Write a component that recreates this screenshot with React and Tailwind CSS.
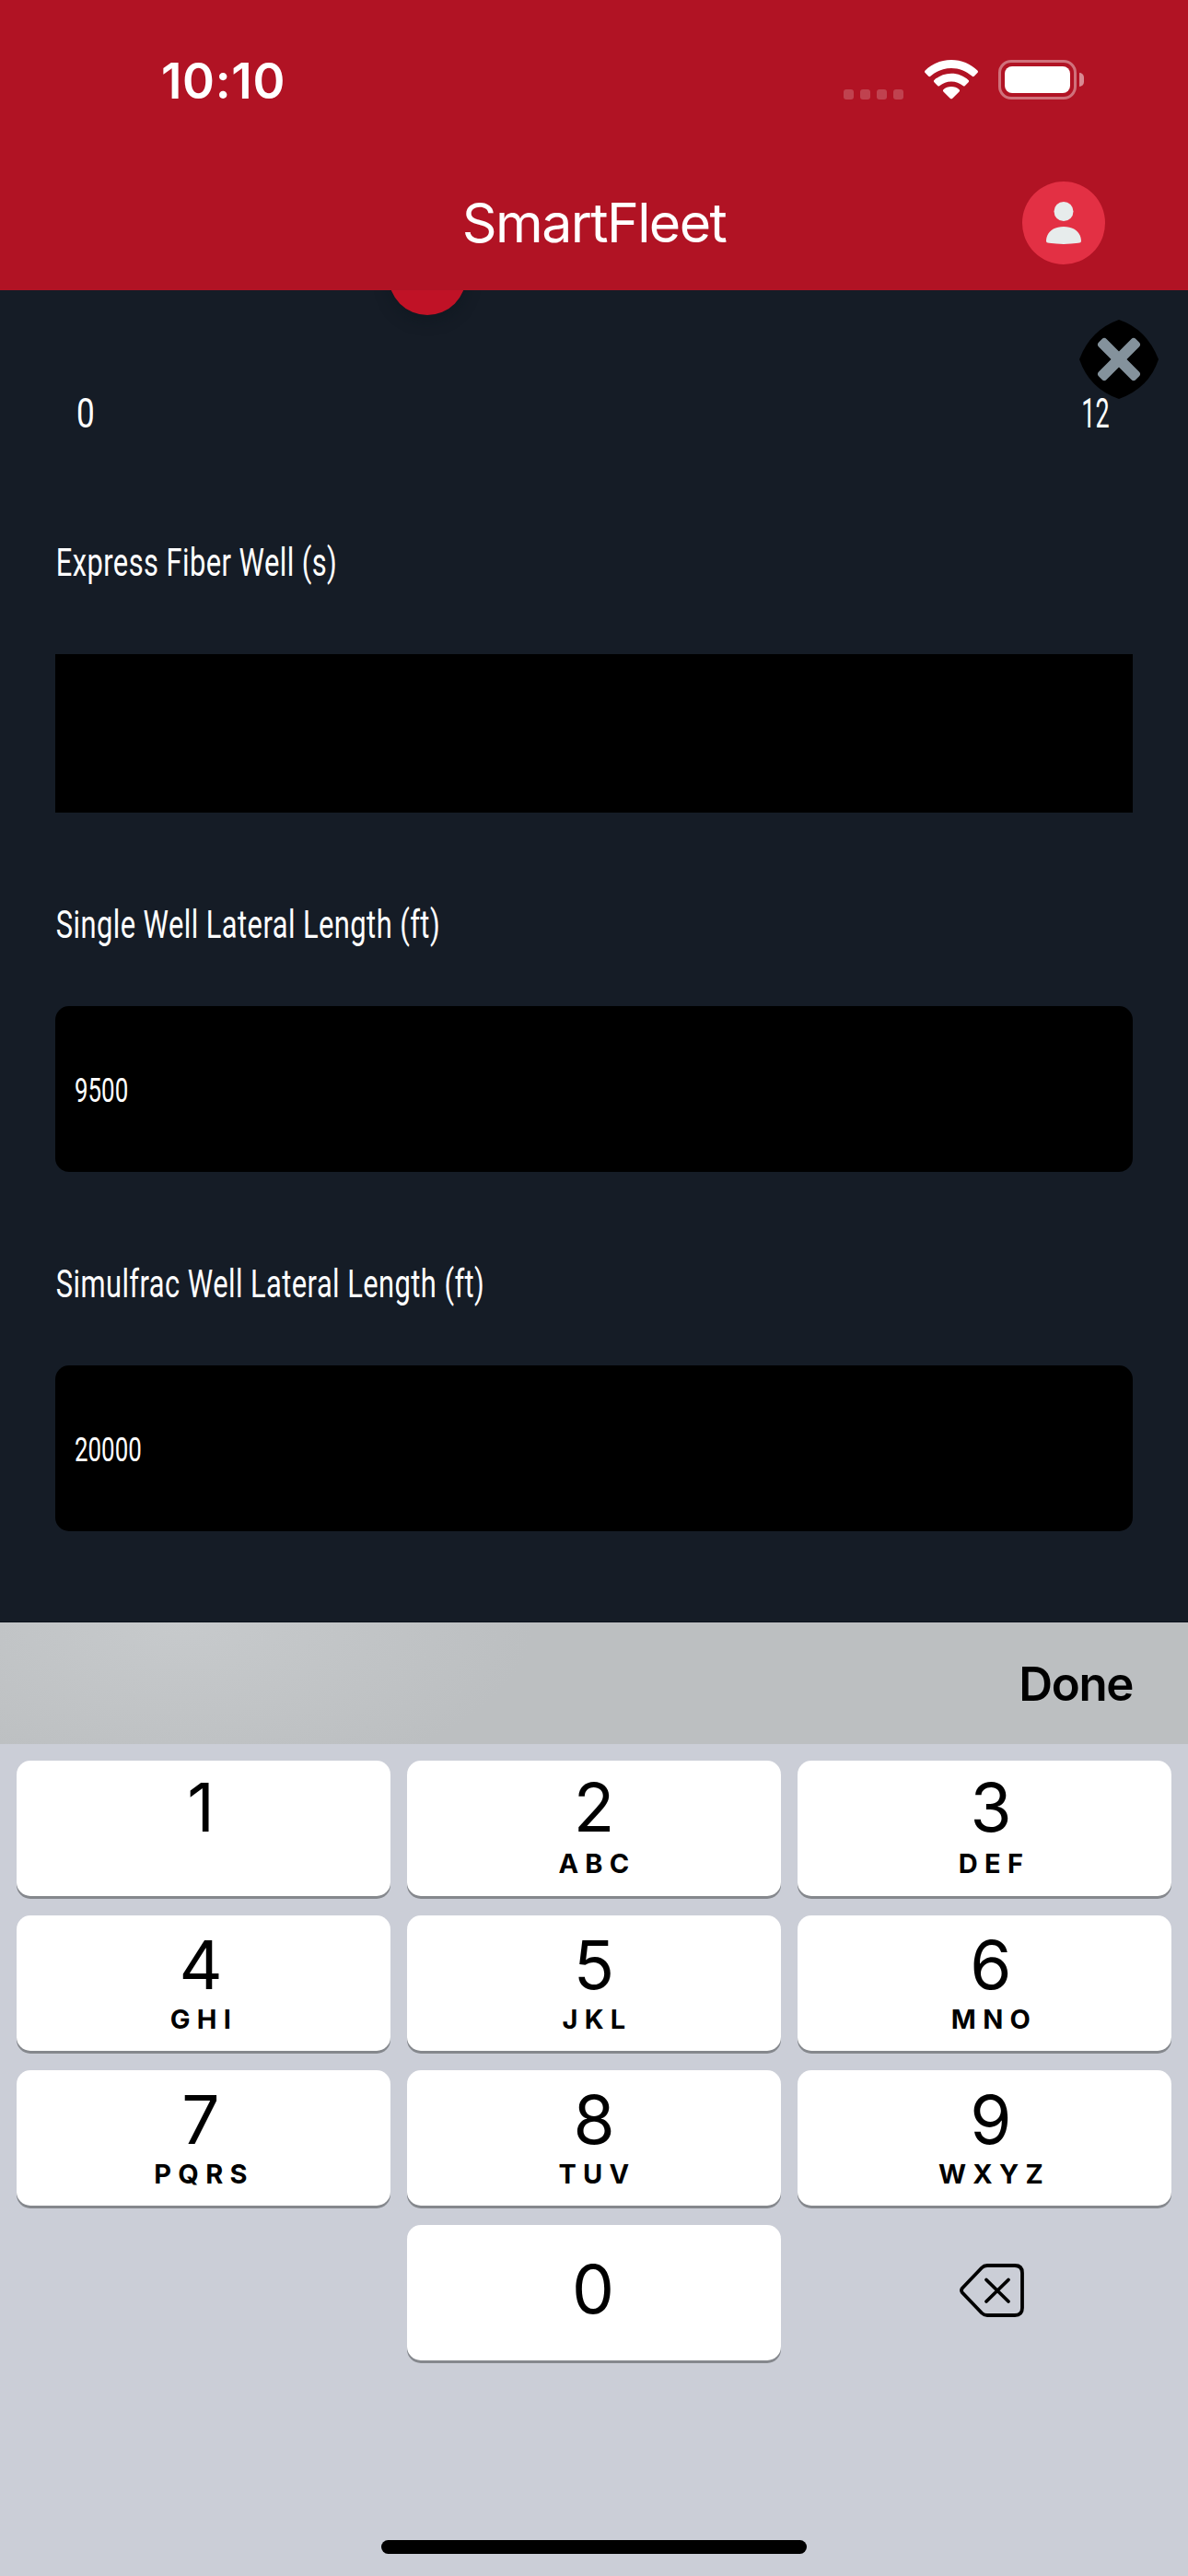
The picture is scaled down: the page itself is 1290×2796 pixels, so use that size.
const KEYS = [
  ["1", ""],
  ["2", "ABC"],
  ["3", "DEF"],
  ["4", "GHI"],
  ["5", "JKL"],
  ["6", "MNO"],
  ["7", "PQRS"],
  ["8", "TUV"],
  ["9", "WXYZ"],
];

const COLUMN_SHIFT = ["pr-[6px]", "pr-0", "pl-[14px]"];

function StatusBar() {
  return (
    <div className="flex h-[176px] items-center justify-between pl-[175px] pr-[113px]">
      <span className="text-[53px] leading-none font-semibold tracking-[0.7px]">10:10</span>
      <div className="-mt-[3px] flex items-center">
        <div className="mt-[31px] flex gap-[7px]">
          {[0, 1, 2, 3].map((n) => (
            <span key={n} className="size-[11px] rounded-[3px] bg-white/20" />
          ))}
        </div>
        <svg className="ml-[23px] h-[43px] w-[58px]" viewBox="0 0 58 43" fill="#fff">
          <path d="M29 0C40 0 50 4.300 57.400 11.500Q58.600 12.900 57.400 14.100L53.800 17.700Q52.600 18.700 51.400 17.600C45.300 12 37.400 8.900 29 8.900S12.700 12 6.600 17.600Q5.400 18.700 4.200 17.700L.6 14.100Q-.6 12.900.6 11.500C8 4.300 18 0 29 0Z" />
          <path d="M29 14.700C36.200 14.700 42.700 17.400 47.600 21.900Q48.700 23.100 47.600 24.300L43.900 28Q42.800 29 41.600 28C38.200 25.100 33.800 23.400 29 23.400S19.800 25.100 16.400 28Q15.200 29 14.100 28L10.400 24.300Q9.300 23.100 10.400 21.900C15.300 17.400 21.800 14.700 29 14.700Z" />
          <path d="M29 29C32.300 29 35.300 30.200 37.600 32.200Q38.700 33.300 37.600 34.400L30.300 41.700Q29 42.900 27.700 41.700L20.400 34.400Q19.300 33.300 20.400 32.200C22.700 30.200 25.700 29 29 29Z" />
        </svg>
        <div className="ml-[22px] h-[43px] w-[85px] rounded-[14px] border-[3px] border-white/40 p-[4px]">
          <div className="h-full rounded-[8px] bg-white" />
        </div>
        <div className="ml-[3px] h-[15px] w-[5px] rounded-r-full bg-white/50" />
      </div>
    </div>
  );
}

function Header() {
  return (
    <header className="relative z-10 h-[315px] bg-[#b11324] text-white">
      <StatusBar />
      <div className="grid h-[132px] grid-cols-[1fr_auto_1fr] items-center pr-[90px] pl-[90px]">
        <span />
        <h1 className="pb-[2px] text-[59px] leading-none font-normal tracking-[-1.6px]">SmartFleet</h1>
        <div className="flex size-[90px] items-center justify-center justify-self-end rounded-full bg-[#e33044]">
          <svg className="h-[46px] w-[38px]" viewBox="0 0 38 46" fill="#e7ecec">
            <circle cx="19" cy="10.500" r="10.500" />
            <path d="M0 43C0 33 8 27 19 27S38 33 38 43Q38 44.500 35 44.800Q19 47 3 44.800Q0 44.500 0 43Z" />
          </svg>
        </div>
      </div>
    </header>
  );
}

function CloseButton() {
  return (
    <button className="absolute top-[32px] right-[32px] z-10">
      <svg className="size-[86px]" viewBox="0 0 86 86">
        <path d="M43 0Q73 10 86 43Q76 74 43 86Q11 75 0 43Q12 11 43 0Z" fill="#000" />
        <g fill="#84929c" transform="rotate(45 43 43)">
          <rect x="14.500" y="37" width="57" height="12" rx="3.500" />
          <rect x="37" y="14.500" width="12" height="57" rx="3.500" />
        </g>
      </svg>
    </button>
  );
}

function Label({ children }) {
  return (
    <div className="mt-[92px] h-[60px] origin-left scale-x-[0.735] pl-px text-[42px] leading-[59px] tracking-[0.6px] whitespace-nowrap">
      {children}
    </div>
  );
}

function Field({ label, value }) {
  return (
    <>
      <Label>{label}</Label>
      <div className="mt-[58px] flex h-[180px] items-center rounded-[15px] bg-black pt-[2px] pl-[21px]">
        <span className="origin-left scale-x-[0.7] text-[37px] leading-none">{value}</span>
      </div>
    </>
  );
}

function Form() {
  return (
    <main className="relative h-[1446px] border-b border-[#0c131d] bg-[#151c26] px-[60px] pt-[105px] font-['Roboto',sans-serif] text-white">
      <div className="absolute -top-[57px] left-[422px] size-[84px] rounded-full bg-[#c01226] shadow-[0_6px_16px_rgba(10,20,25,0.35)]" />
      <CloseButton />
      <div className="flex h-[60px] items-center justify-between pr-[25px] pb-[3px] pl-[23px] text-[45px] leading-none">
        <span className="origin-left scale-x-[0.78]">0</span>
        <span className="origin-right scale-x-[0.6]">12</span>
      </div>
      <div className="mt-[9px] flow-root">
        <Label>Express Fiber Well (s)</Label>
      </div>
      <div className="mt-[69px] h-[172px] bg-black" />
      <Field label="Single Well Lateral Length (ft)" value="9500" />
      <Field label="Simulfrac Well Lateral Length (ft)" value="20000" />
    </main>
  );
}

function Keypad() {
  return (
    <div className="grid grid-cols-3 gap-x-[18px] gap-y-[21px] px-[18px] pt-[18px]">
      {KEYS.map(([digit, letters], i) => (
        <button
          key={digit}
          className={`flex h-[147px] flex-col items-center rounded-[15px] bg-white shadow-[0_3px_0_#85888d] ${COLUMN_SHIFT[i % 3]} ${i < 3 ? "pt-[13px]" : "pt-[16px]"}`}
        >
          <span className="text-[73px] leading-[75px] font-normal">{digit}</span>
          <span className={`-mr-[7px] text-[29px] leading-[30px] font-bold tracking-[7.3px] ${i < 3 ? "mt-[9px]" : "mt-[7px]"}`}>
            {letters}
          </span>
        </button>
      ))}
      <span />
      <button className="flex h-[147px] items-center justify-center rounded-[15px] bg-white pb-[8px] pr-[2px] text-[73px] leading-none font-normal shadow-[0_3px_0_#85888d]">
        0
      </button>
      <button className="flex h-[147px] items-center justify-center pb-[6px] pl-[15px]">
        <svg className="h-[58px] w-[70px]" viewBox="0 0 70 58" fill="none" stroke="#000" strokeWidth="3.800" strokeLinecap="round" strokeLinejoin="round">
          <path d="M30 2H60Q68 2 68 10V48Q68 56 60 56H30Q26.500 56 24 53.500L3 31.500Q1 29 3 26.500L24 4.500Q26.500 2 30 2Z" />
          <path d="M29 17.500L53 41M53 17.500L29 41" />
        </svg>
      </button>
    </div>
  );
}

export default function App() {
  return (
    <div className="flex h-[2796px] w-[1290px] flex-col overflow-hidden bg-[#cbced7] font-['Inter',sans-serif] text-black">
      <Header />
      <Form />
      <div className="flex h-[132px] items-center justify-end bg-[radial-gradient(ellipse_420px_200px_at_200px_0px,#c7cacc,#bcbfc1_90%)] pr-[60px]">
        <button className="text-[51px] leading-none font-semibold tracking-[-1.4px]">Done</button>
      </div>
      <Keypad />
      <div className="mt-auto mb-[24px] h-[15px] w-[462px] self-center rounded-full bg-black" />
    </div>
  );
}
